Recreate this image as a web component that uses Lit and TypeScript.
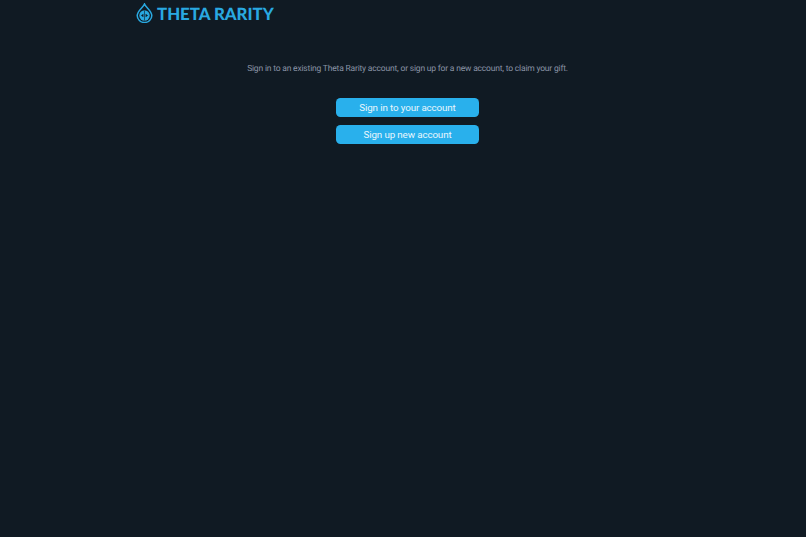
import { LitElement, html, css } from "lit";
import { customElement } from "lit/decorators.js";

@customElement("app-root")
export class AppRoot extends LitElement {
  static styles = css`
    :host {
      display: block;
      min-height: 537px;
      background: #101a23;
      font-family: "Roboto", "Lato", sans-serif;
      text-rendering: geometricPrecision;
    }
    .wrap {
      width: 549px;
      margin-left: 133px;
      display: flex;
      flex-direction: column;
    }
    .logo {
      display: flex;
      align-items: center;
      gap: 4px;
      height: 26px;
      padding-left: 3px;
      color: #29a9e1;
      font-size: 16.8px;
      font-weight: 900;
      font-family: "Lato", sans-serif;
      white-space: nowrap;
    }
    .logo svg { display: block; flex: none; }
    .msg {
      margin: 36px 0 0;
      text-align: center;
      font-size: 8.5px;
      letter-spacing: -0.19px;
      line-height: 14px;
      color: #8a94a6;
      white-space: nowrap;
    }
    .actions {
      display: flex;
      flex-direction: column;
      align-items: center;
      gap: 7.5px;
      margin-top: 22px;
    }
    button {
      width: 143px;
      height: 19px;
      padding: 0;
      border: 0;
      border-radius: 4.5px;
      background: #29b0ec;
      color: #e8f6fd;
      font: 400 9.8px/19px "Roboto", sans-serif;
      letter-spacing: -0.13px;
    }
  `;

  render() {
    return html`
      <div class="wrap">
        <div class="logo">
          <svg width="17" height="20" viewBox="0 0 17 20" fill="none">
            <path d="M8.5 1 C7.5 4 1.2 8 1.2 12.5 A7.3 7 0 0 0 15.8 12.5 C15.8 8 9.5 4 8.5 1Z" stroke="#29a9e1" stroke-width="1.5"/>
            <circle cx="8.5" cy="12.5" r="5.2" fill="#29a9e1"/>
            <rect x="8.2" y="7.5" width="0.6" height="10" fill="#101a23"/>
            <path d="M7.4 10.7v3.6L5 12.5Z M9.6 10.7v3.6l2.4-1.8Z" fill="#101a23"/>
          </svg>
          <span>THETA RARITY</span>
        </div>
        <p class="msg">Sign in to an existing Theta Rarity account, or sign up for a new account, to claim your gift.</p>
        <div class="actions">
          <button>Sign in to your account</button>
          <button>Sign up new account</button>
        </div>
      </div>
    `;
  }
}
